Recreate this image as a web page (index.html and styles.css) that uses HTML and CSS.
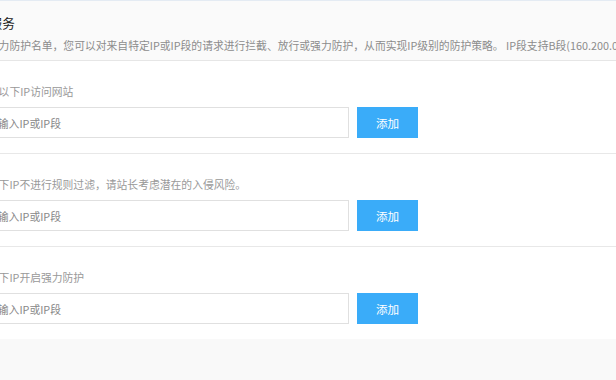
FILE: index.html
```html
<!DOCTYPE html>
<html lang="zh-CN">
    <head>
        <meta charset="UTF-8">
        <meta name="viewport" content="width=device-width, initial-scale=1.0">
        <title>IP防护服务</title>
        <link rel="stylesheet" href="styles.css">
    </head>
    <body>
        <div class="panel">
            <div class="panel-head">
                <h3>盾服务</h3>
                <p class="desc">及强力防护名单，您可以对来自特定IP或IP段的请求进行拦截、放行或强力防护，从而实现IP级别的防护策略。 IP段支持B段(160.200.0.0/16)和C段(160.200.1.0/24)</p>
            </div>
            <div class="rule">
                <label class="rule-label">禁止以下IP访问网站</label>
                <div class="rule-row">
                    <input type="text" class="ip-input" placeholder="请输入IP或IP段">
                    <button class="add-btn">添加</button>
                </div>
            </div>
            <div class="rule">
                <label class="rule-label">对以下IP不进行规则过滤，请站长考虑潜在的入侵风险。</label>
                <div class="rule-row">
                    <input type="text" class="ip-input" placeholder="请输入IP或IP段">
                    <button class="add-btn">添加</button>
                </div>
            </div>
            <div class="rule last">
                <label class="rule-label">对以下IP开启强力防护</label>
                <div class="rule-row">
                    <input type="text" class="ip-input" placeholder="请输入IP或IP段">
                    <button class="add-btn">添加</button>
                </div>
            </div>
        </div>
    </body>
</html>
```

FILE: styles.css
```css
/* General Styles */
body {
    margin: 0;
    padding: 0;
    background-color: #f9f9f9;
    font-family: 'Noto Sans CJK SC', 'Liberation Sans', sans-serif;
    overflow: hidden;
}

.panel {
    margin-left: -43px;
    background-color: white;
    border-top: 1px solid #e4ebf3;
}

.panel-head {
    background-color: #fafafa;
    border-bottom: 1px solid #e6e6e6;
    padding: 12px 0 5px 20px;
    white-space: nowrap;
}

.panel-head h3 {
    margin: 0 0 2px 0;
    font-size: 12.6px;
    line-height: 20px;
    font-weight: normal;
    color: #222;
}

.desc {
    margin: 0;
    font-size: 10.8px;
    line-height: 20px;
    color: #8c8c8c;
}

.rule {
    padding: 20px 0 15px 20px;
    border-bottom: 1px solid #e8e8e8;
}

.rule.last {
    border-bottom: none;
}

.rule-label {
    display: block;
    font-size: 10.8px;
    line-height: 20px;
    color: #999;
    margin-bottom: 6px;
    white-space: nowrap;
}

.rule-row {
    display: flex;
    gap: 8px;
}

.ip-input {
    width: 372px;
    height: 31px;
    box-sizing: border-box;
    border: 1px solid #e0e0e0;
    padding: 0 9px;
    font-family: inherit;
    font-size: 10.8px;
    color: #333;
    outline: none;
}

.ip-input::placeholder {
    color: #888;
}

.add-btn {
    width: 61px;
    height: 31px;
    box-sizing: border-box;
    border: none;
    background-color: #3aacf9;
    color: white;
    font-family: inherit;
    font-size: 11.6px;
    cursor: pointer;
}
```
